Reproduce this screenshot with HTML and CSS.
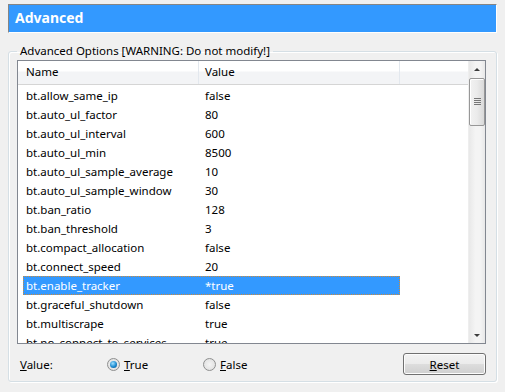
FILE: index.html
```html
<!DOCTYPE html>
<html>
<head>
<meta charset="utf-8">
<link rel="stylesheet" href="styles.css">
</head>
<body>
<div class="window">
  <div class="title">Advanced</div>
  <fieldset class="group">
    <legend>Advanced Options [WARNING: Do not modify!]</legend>
    <div class="list">
      <div class="list-main">
        <div class="header">
          <div class="hcell hname">Name</div>
          <div class="hcell hvalue">Value</div>
          <div class="hcell hfill"></div>
        </div>
        <div class="rows">
          <div class="row"><span class="c1">bt.allow_same_ip</span><span class="c2">false</span></div>
          <div class="row"><span class="c1">bt.auto_ul_factor</span><span class="c2">80</span></div>
          <div class="row"><span class="c1">bt.auto_ul_interval</span><span class="c2">600</span></div>
          <div class="row"><span class="c1">bt.auto_ul_min</span><span class="c2">8500</span></div>
          <div class="row"><span class="c1">bt.auto_ul_sample_average</span><span class="c2">10</span></div>
          <div class="row"><span class="c1">bt.auto_ul_sample_window</span><span class="c2">30</span></div>
          <div class="row"><span class="c1">bt.ban_ratio</span><span class="c2">128</span></div>
          <div class="row"><span class="c1">bt.ban_threshold</span><span class="c2">3</span></div>
          <div class="row"><span class="c1">bt.compact_allocation</span><span class="c2">false</span></div>
          <div class="row"><span class="c1">bt.connect_speed</span><span class="c2">20</span></div>
          <div class="row selected"><span class="c1">bt.enable_tracker</span><span class="c2">*true</span></div>
          <div class="row"><span class="c1">bt.graceful_shutdown</span><span class="c2">false</span></div>
          <div class="row"><span class="c1">bt.multiscrape</span><span class="c2">true</span></div>
          <div class="row"><span class="c1">bt.no_connect_to_services</span><span class="c2">true</span></div>
        </div>
      </div>
      <div class="scrollbar">
        <div class="arrow up"></div>
        <div class="thumb"><span class="grip"></span></div>
        <div class="track"></div>
        <div class="arrow down"></div>
      </div>
    </div>
    <div class="controls">
      <span class="vlabel"><u>V</u>alue:</span>
      <label class="radio radio-true"><span class="dot checked"></span><span><u>T</u>rue</span></label>
      <label class="radio radio-false"><span class="dot"></span><span><u>F</u>alse</span></label>
      <button class="reset"><u>R</u>eset</button>
    </div>
  </fieldset>
</div>
</body>
</html>
```

FILE: styles.css
```css
* { box-sizing: border-box; }
html, body { margin: 0; padding: 0; }
body {
  width: 505px;
  height: 392px;
  background: #f0f0f0;
  font-family: "Noto Sans", "Open Sans", sans-serif;
  font-size: 11.5px;
  color: #000;
  overflow: hidden;
}
.window {
  padding: 4px 8px 0 8px;
}
.title {
  height: 29px;
  background: #3399ff;
  border-top: 1px solid #858585;
  border-left: 1px solid #858585;
  border-right: 1px solid #ffffff;
  border-bottom: 1px solid #ffffff;
  color: #fff;
  font-weight: bold;
  font-size: 14px;
  line-height: 26px;
  padding-left: 6px;
}
.group {
  margin: 9px 0 0 0;
  padding: 0 10px 6px 8px;
  border: 1px solid #d5dfe5;
  border-radius: 3px;
  box-shadow: inset 1px 1px 0 #fff, 1px 1px 0 #fff;
  height: 340px;
}
.group legend {
  padding: 0 3px;
  margin-left: 0;
  line-height: 18px;
  color: #000;
}
.list {
  height: 284px;
  border: 1px solid #828790;
  background: #fff;
  display: flex;
}
.list-main {
  flex: 1;
  overflow: hidden;
}
.header {
  display: flex;
  height: 24px;
  background: linear-gradient(#ffffff 0, #ffffff 10px, #f3f4f6 11px, #f3f4f6 100%);
  border-bottom: 1px solid #d5d5d5;
}
.hcell {
  line-height: 22px;
  border-right: 1px solid #e3e8ee;
}
.hname { width: 181px; padding-left: 8px; }
.hvalue { width: 201px; padding-left: 6px; }
.hfill { flex: 1; border-right: none; }
.rows { padding-top: 1px; }
.row {
  display: flex;
  height: 19px;
  line-height: 17px;
  margin-left: 5px;
  width: 377px;
  border: 1px solid transparent;
}
.row .c1 { width: 175px; padding-left: 2px; white-space: nowrap; }
.row .c2 { padding-left: 6px; white-space: nowrap; }
.row.selected {
  background: #3399ff;
  color: #fff;
  border: 1px dotted #cc8a3c;
}
.scrollbar {
  width: 17px;
  display: flex;
  flex-direction: column;
  background: linear-gradient(90deg, #e8e8e8, #f4f4f4 40%, #f4f4f4 70%, #e8e8e8);
  border-left: 1px solid #eeeeee;
}
.arrow {
  height: 17px;
  position: relative;
}
.arrow::after {
  content: "";
  position: absolute;
  left: 5px;
  width: 0;
  height: 0;
  border-left: 3px solid transparent;
  border-right: 3px solid transparent;
}
.arrow.up::after { top: 7px; border-bottom: 3px solid #3c3c3c; }
.arrow.down::after { top: 8px; border-top: 3px solid #3c3c3c; }
.thumb {
  height: 48px;
  border: 1px solid #979797;
  border-radius: 2px;
  background: linear-gradient(90deg, #f2f2f2, #ebebeb 50%, #d9d9d9);
  box-shadow: inset 1px 1px 0 #fff;
  position: relative;
}
.grip {
  position: absolute;
  left: 4px;
  top: 19px;
  width: 7px;
  height: 8px;
  background: repeating-linear-gradient(#777 0, #777 1px, transparent 1px, transparent 2px);
}
.track { flex: 1; }
.controls {
  display: flex;
  align-items: center;
  height: 22px;
  margin-top: 9px;
}
.vlabel { margin-left: 3px; width: 87px; }
.radio {
  display: flex;
  align-items: center;
  gap: 4px;
}
.radio-true { width: 96px; }
.dot {
  width: 13px;
  height: 13px;
  border-radius: 50%;
  border: 1px solid #8e8f8f;
  background: radial-gradient(circle at 50% 50%, #f4f4f4 0, #dcdcdc 100%);
  position: relative;
}
.dot.checked::after {
  content: "";
  position: absolute;
  left: 2px;
  top: 2px;
  width: 7px;
  height: 7px;
  border-radius: 50%;
  background: radial-gradient(circle at 40% 35%, #9ee0ff 0, #1b8ad0 55%, #0a4b80 100%);
}
.reset {
  margin-left: auto;
  width: 83px;
  height: 22px;
  border: 1px solid #707070;
  border-radius: 3px;
  background: linear-gradient(#f2f2f2 0, #ebebeb 50%, #dddddd 51%, #cfcfcf 100%);
  box-shadow: inset 0 0 0 1px #fcfcfc;
  font: inherit;
  color: #000;
  padding: 0;
}
```
